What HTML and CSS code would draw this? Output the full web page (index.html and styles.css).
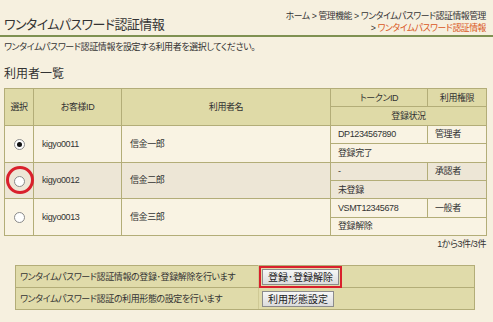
FILE: index.html
```html
<!DOCTYPE html>
<html lang="ja">
<head>
    <meta charset="UTF-8">
    <title>ワンタイムパスワード認証情報</title>
    <link rel="stylesheet" href="styles.css">
</head>
<body>
    <div class="header">
        <h1 class="page-title">ワンタイムパスワード認証情報</h1>
        <div class="breadcrumb">
            <div>ホーム &gt; 管理機能 &gt; ワンタイムパスワード認証情報管理</div>
            <div>&gt; <span class="current">ワンタイムパスワード認証情報</span></div>
        </div>
    </div>

    <p class="lead">ワンタイムパスワード認証情報を設定する利用者を選択してください。</p>

    <h2 class="section-title">利用者一覧</h2>

    <table class="user-list">
        <colgroup>
            <col class="col-select">
            <col class="col-id">
            <col class="col-name">
            <col class="col-token">
            <col class="col-role">
        </colgroup>
        <tr class="head">
            <th rowspan="2">選択</th>
            <th rowspan="2">お客様ID</th>
            <th rowspan="2">利用者名</th>
            <th>トークンID</th>
            <th>利用権限</th>
        </tr>
        <tr class="head">
            <th colspan="2">登録状況</th>
        </tr>

        <tr class="row-a">
            <td rowspan="2" class="select"><span class="radio checked"></span></td>
            <td rowspan="2" class="main">kigyo0011</td>
            <td rowspan="2" class="main">信金一郎</td>
            <td>DP1234567890</td>
            <td>管理者</td>
        </tr>
        <tr class="row-a">
            <td colspan="2">登録完了</td>
        </tr>

        <tr class="row-b">
            <td rowspan="2" class="select"><span class="radio"></span><span class="mark-circle"></span></td>
            <td rowspan="2" class="main">kigyo0012</td>
            <td rowspan="2" class="main">信金二郎</td>
            <td>-</td>
            <td>承認者</td>
        </tr>
        <tr class="row-b">
            <td colspan="2">未登録</td>
        </tr>

        <tr class="row-a">
            <td rowspan="2" class="select"><span class="radio"></span></td>
            <td rowspan="2" class="main">kigyo0013</td>
            <td rowspan="2" class="main">信金三郎</td>
            <td>VSMT12345678</td>
            <td>一般者</td>
        </tr>
        <tr class="row-a">
            <td colspan="2">登録解除</td>
        </tr>
    </table>

    <div class="count">1から3件/3件</div>

    <table class="actions">
        <tr>
            <td class="label">ワンタイムパスワード認証情報の登録･登録解除を行います</td>
            <td class="btn-cell"><span class="btn-wrap"><button class="btn">登録･登録解除</button><span class="mark-rect"></span></span></td>
        </tr>
        <tr>
            <td class="label">ワンタイムパスワード認証の利用形態の設定を行います</td>
            <td class="btn-cell"><button class="btn">利用形態設定</button></td>
        </tr>
    </table>
</body>
</html>
```

FILE: styles.css
```css
body {
    margin: 0;
    padding: 0 7px 0 4px;
    font-family: "Liberation Sans", "Noto Sans CJK JP", sans-serif;
    font-feature-settings: "palt";
    font-size: 9px;
    letter-spacing: -0.4px;
    color: #333333;
    background-color: #f6f0df;
}

.header {
    display: flex;
    justify-content: space-between;
    align-items: flex-end;
    border-bottom: 2px solid #7f9152;
    height: 35px;
    margin: 0 -7px 0 -4px;
    padding: 0 7px 0 4px;
}

.page-title {
    margin: 0 0 3px;
    font-size: 13px;
    letter-spacing: -0.6px;
    font-weight: normal;
    line-height: 14px;
}

.breadcrumb {
    text-align: right;
    font-size: 8.8px;
    letter-spacing: -0.4px;
    line-height: 12px;
    margin-bottom: 1px;
}

.breadcrumb .current {
    color: #d9561c;
}

.lead {
    margin: 4px 0 0;
    line-height: 12px;
}

.section-title {
    margin: 14px 0 0;
    font-size: 12px;
    letter-spacing: 0;
    font-weight: normal;
    line-height: 14px;
}

.user-list {
    margin-top: 7px;
    width: 482px;
    table-layout: fixed;
    border-collapse: collapse;
    border: 1px solid #b3ad78;
}

.user-list .col-select { width: 29px; }
.user-list .col-id { width: 88px; }
.user-list .col-name { width: 209px; }
.user-list .col-token { width: 97px; }
.user-list .col-role { width: 59px; }

.user-list th,
.user-list td {
    border: 1px solid #b3ad78;
    padding: 0 7px;
    height: 17.4px;
    line-height: 12px;
    font-weight: normal;
    text-align: left;
    white-space: nowrap;
}

.user-list th {
    background-color: #dfdaa7;
    text-align: center;
    padding: 0;
}

.user-list td.main {
    padding-left: 8px;
}

.row-a td {
    background-color: #f9f3e3;
}

.row-b td {
    background-color: #ede6d6;
}

.user-list td.select {
    position: relative;
    text-align: center;
    padding: 0;
}

.radio {
    display: inline-block;
    width: 9px;
    height: 9px;
    border: 1px solid #8a8a8a;
    border-radius: 50%;
    background-color: #ffffff;
    vertical-align: middle;
    position: relative;
}

.radio.checked::after {
    content: "";
    position: absolute;
    left: 2px;
    top: 2px;
    width: 5px;
    height: 5px;
    border-radius: 50%;
    background-color: #111111;
}

.mark-circle {
    position: absolute;
    left: 1px;
    top: 50%;
    width: 22px;
    height: 22px;
    margin-top: -14px;
    border: 3px solid #d9202c;
    border-radius: 50%;
}

.count {
    text-align: right;
    line-height: 12px;
    margin-top: 2px;
}

.actions {
    margin: 15px 11px 0;
    width: 460px;
    border-collapse: collapse;
    border: 1px solid #b3ad78;
    background-color: #e0dbaa;
}

.actions td {
    border-top: 1px solid #b3ad78;
    border-bottom: 1px solid #b3ad78;
    height: 21px;
    padding: 0;
    white-space: nowrap;
}

.actions .label {
    padding-left: 4px;
    width: 238px;
    border-right: 1px solid #cfc995;
}

.actions .btn-cell {
    padding-left: 3px;
}

.btn-wrap {
    position: relative;
    display: inline-block;
    vertical-align: middle;
}

.btn {
    font-family: "Noto Sans CJK JP", sans-serif;
    font-size: 10px;
    letter-spacing: 0;
    line-height: 12px;
    height: 16px;
    padding: 0 5px;
    color: #222222;
    background: linear-gradient(#f6f6f6, #dcdcdc);
    border: 1px solid #8c8c8c;
    border-radius: 0;
    vertical-align: middle;
}

.mark-rect {
    position: absolute;
    left: -3px;
    top: -3px;
    right: -3px;
    bottom: -3px;
    border: 2px solid #d9202c;
}
```
